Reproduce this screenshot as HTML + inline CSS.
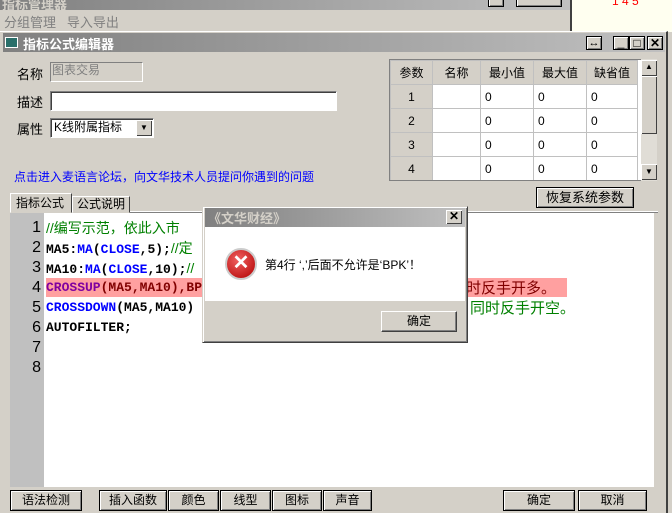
<!DOCTYPE html><html><head><meta charset="utf-8"><style>
*{box-sizing:border-box;margin:0;padding:0}
body{width:672px;height:513px;overflow:hidden;background:#d4d0c8;font-family:"Liberation Sans","Noto Sans CJK SC",sans-serif;font-size:12px;position:relative;color:#000}
.a{position:absolute}
.btn{position:absolute;background:#d4d0c8;border:1px solid #000;box-shadow:inset 1px 1px 0 #fff,inset -1px -1px 0 #808080;text-align:center;font-size:12px;line-height:19px}
.sunk{position:absolute;background:#fff;border:1px solid;border-color:#808080 #fff #fff #808080;box-shadow:inset 1px 1px 0 #404040}
.code{position:absolute;left:46px;font-family:"Liberation Mono","Noto Sans CJK SC",monospace;font-weight:bold;font-size:13px;line-height:20px;white-space:pre}
.ln{position:absolute;left:10px;width:34px;text-align:right;padding-right:3px;font-family:"Liberation Sans",sans-serif;font-size:16px;line-height:20px}
.g{color:#008000;font-weight:normal;font-family:"Liberation Sans","Noto Sans CJK SC",sans-serif;font-size:14px}
.b{color:#0000ff}
table{border-collapse:collapse}
td{border:1px solid #c0c0c0;height:24px;font-size:12px;padding-left:4px}
</style></head><body>
<div class="a" style="left:0;top:0;width:570px;height:10px;background:linear-gradient(90deg,#808080,#c0c0c0)"></div>
<div class="a" style="left:2px;top:-6px;color:#d4d0c8;font-weight:bold;font-size:13px">指标管理器</div>
<div class="a" style="left:4px;top:12px;color:#808080;font-size:13px">分组管理&nbsp;&nbsp;&nbsp;导入导出</div>
<div class="btn" style="left:488px;top:-5px;width:16px;height:12px"></div>
<div class="btn" style="left:516px;top:-5px;width:46px;height:12px"></div>
<div class="a" style="left:570px;top:0;width:102px;height:32px;background:#fffff0;border-left:2px solid #404040"></div>
<div class="a" style="left:612px;top:-6px;color:#f00;font-size:12px">1 4 5</div>
<!-- front window -->
<div class="a" style="left:0;top:31px;width:668px;height:482px;border-top:1px solid #fff;border-right:2px solid #404040"></div>
<div class="a" style="left:3px;top:33px;width:662px;height:19px;background:linear-gradient(90deg,#808080,#c0c0c0)"></div>
<div class="a" style="left:5px;top:37px;width:13px;height:11px;background:#2a6f6a;border:1px solid #fff"></div>
<div class="a" style="left:23px;top:34px;color:#fff;font-weight:bold;font-size:13px">指标公式编辑器</div>
<div class="btn" style="left:586px;top:36px;width:16px;height:14px;line-height:12px;font-size:11px">↔</div>
<div class="btn" style="left:613px;top:36px;width:16px;height:14px;line-height:10px">_</div>
<div class="btn" style="left:629px;top:36px;width:16px;height:14px;line-height:12px">□</div>
<div class="btn" style="left:647px;top:36px;width:16px;height:14px;line-height:12px;font-weight:bold">✕</div>
<div class="a" style="left:17px;top:64px;font-size:13px">名称</div>
<div class="a" style="left:50px;top:62px;width:93px;height:20px;border:1px solid;border-color:#808080 #fff #fff #808080;color:#808080;padding-left:1px;font-size:12px;line-height:14px">图表交易</div>
<div class="a" style="left:17px;top:92px;font-size:13px">描述</div>
<div class="sunk" style="left:50px;top:91px;width:287px;height:20px"></div>
<div class="a" style="left:17px;top:119px;font-size:13px">属性</div>
<div class="sunk" style="left:50px;top:118px;width:104px;height:20px;font-size:12px;line-height:17px;padding-left:3px">K线附属指标</div>
<div class="btn" style="left:136px;top:120px;width:16px;height:16px;border:none;box-shadow:inset 1px 1px 0 #fff,inset -1px -1px 0 #404040;font-size:8px;line-height:16px">▼</div>
<div class="a" style="left:14px;top:168px;color:#0000ff;font-size:12px">点击进入麦语言论坛，向文华技术人员提问你遇到的问题</div>
<!-- table -->
<div class="a" style="left:389px;top:59px;width:253px;height:122px;border:1px solid #808080;background:#fff;overflow:hidden">
<table style="width:248px">
<tr style="background:#d4d0c8"><td style="width:42px;text-align:center;padding:0">参数</td><td style="width:48px;text-align:center;padding:0">名称</td><td style="width:53px;text-align:center;padding:0">最小值</td><td style="width:53px;text-align:center;padding:0">最大值</td><td style="text-align:center;padding:0">缺省值</td></tr>
<tr><td style="background:#d4d0c8;text-align:center;padding:0">1</td><td></td><td>0</td><td>0</td><td>0</td></tr>
<tr><td style="background:#d4d0c8;text-align:center;padding:0">2</td><td></td><td>0</td><td>0</td><td>0</td></tr>
<tr><td style="background:#d4d0c8;text-align:center;padding:0">3</td><td></td><td>0</td><td>0</td><td>0</td></tr>
<tr><td style="background:#d4d0c8;text-align:center;padding:0">4</td><td></td><td>0</td><td>0</td><td>0</td></tr>
</table></div>
<div class="a" style="left:641px;top:59px;width:16px;height:122px;background:#e0ddd6"></div>
<div class="btn" style="left:641px;top:60px;width:16px;height:16px;border:none;box-shadow:inset 1px 1px 0 #fff,inset -1px -1px 0 #404040;font-size:8px;line-height:14px">▲</div>
<div class="btn" style="left:641px;top:76px;width:16px;height:58px;border:none;box-shadow:inset 1px 1px 0 #fff,inset -1px -1px 0 #404040"></div>
<div class="btn" style="left:641px;top:164px;width:16px;height:16px;border:none;box-shadow:inset 1px 1px 0 #fff,inset -1px -1px 0 #404040;font-size:8px;line-height:16px">▼</div>
<div class="btn" style="left:536px;top:187px;width:98px;height:21px;font-size:13px">恢复系统参数</div>
<!-- tabs -->
<div class="a" style="left:10px;top:193px;width:62px;height:20px;border:1px solid;border-color:#fff #404040 transparent #fff;font-size:12px;padding-left:5px;line-height:18px;background:#d4d0c8;z-index:2">指标公式</div>
<div class="a" style="left:72px;top:196px;width:58px;height:17px;border:1px solid;border-color:#fff #404040 transparent #fff;font-size:12px;padding-left:4px;line-height:15px">公式说明</div>
<div class="a" style="left:130px;top:211px;width:528px;height:2px;border-top:1px solid #fff;border-bottom:1px solid #808080"></div>
<!-- editor -->
<div class="a" style="left:10px;top:213px;width:644px;height:274px;background:#fff"></div>
<div class="a" style="left:10px;top:213px;width:34px;height:274px;background:#c0c0c0"></div>
<div class="a" style="left:46px;top:278px;width:521px;height:19px;background:#ffa0a0"></div>
<div class="ln" style="top:218px">1</div><div class="ln" style="top:238px">2</div><div class="ln" style="top:258px">3</div><div class="ln" style="top:278px">4</div><div class="ln" style="top:298px">5</div><div class="ln" style="top:318px">6</div><div class="ln" style="top:338px">7</div><div class="ln" style="top:358px">8</div>
<div class="code" style="top:218px"><span class="g">//编写示范，依此入市</span></div>
<div class="code" style="top:238px">MA5:<span class="b">MA</span>(<span class="b">CLOSE</span>,5);<span class="g">//定</span></div>
<div class="code" style="top:258px">MA10:<span class="b">MA</span>(<span class="b">CLOSE</span>,10);<span class="g">//</span></div>
<div class="code" style="top:278px;color:#800000"><span style="color:#8000a0">CROSSUP</span>(MA5,MA10),BP</div>
<div class="code" style="top:298px"><span class="b">CROSSDOWN</span>(MA5,MA10)</div>
<div class="code" style="top:318px">AUTOFILTER;</div>
<div class="a g" style="left:466px;top:277px;font-size:15px;color:#800000">时反手开多。</div>
<div class="a g" style="left:470px;top:297px;font-size:15px">同时反手开空。</div>
<!-- dialog -->
<div class="a" style="left:202px;top:206px;width:266px;height:137px;background:#d4d0c8;border:1px solid;border-color:#d4d0c8 #404040 #404040 #d4d0c8;box-shadow:inset 1px 1px 0 #fff,inset -1px -1px 0 #808080"></div>
<div class="a" style="left:205px;top:208px;width:260px;height:19px;background:linear-gradient(90deg,#808080,#c0c0c0)"></div>
<div class="a" style="left:208px;top:208px;color:#d4d0c8;font-weight:bold;font-size:13px">《文华财经》</div>
<div class="btn" style="left:446px;top:210px;width:16px;height:14px;line-height:12px;font-weight:bold;border:none;box-shadow:inset 1px 1px 0 #fff,inset -1px -1px 0 #404040">✕</div>
<div class="a" style="left:205px;top:227px;width:260px;height:74px;background:#fff"></div>
<div class="a" style="left:225px;top:248px;width:32px;height:32px;border-radius:50%;background:radial-gradient(circle at 40% 35%,#f06060,#b00000);border:2px solid #ccc;color:#fff;font-weight:bold;font-size:20px;text-align:center;line-height:27px">✕</div>
<div class="a" style="left:265px;top:256px;font-size:12px">第4行 ‘,’后面不允许是‘BPK’！</div>
<div class="btn" style="left:381px;top:311px;width:76px;height:21px;border-color:#fff #404040 #404040 #fff;box-shadow:inset -1px -1px 0 #808080">确定</div>
<!-- bottom -->
<div class="btn" style="left:10px;top:490px;width:72px;height:21px">语法检测</div>
<div class="btn" style="left:99px;top:490px;width:68px;height:21px">插入函数</div>
<div class="btn" style="left:168px;top:490px;width:51px;height:21px">颜色</div>
<div class="btn" style="left:220px;top:490px;width:51px;height:21px">线型</div>
<div class="btn" style="left:272px;top:490px;width:50px;height:21px">图标</div>
<div class="btn" style="left:323px;top:490px;width:49px;height:21px">声音</div>
<div class="btn" style="left:503px;top:490px;width:72px;height:21px">确定</div>
<div class="btn" style="left:578px;top:490px;width:69px;height:21px">取消</div>
</body></html>
